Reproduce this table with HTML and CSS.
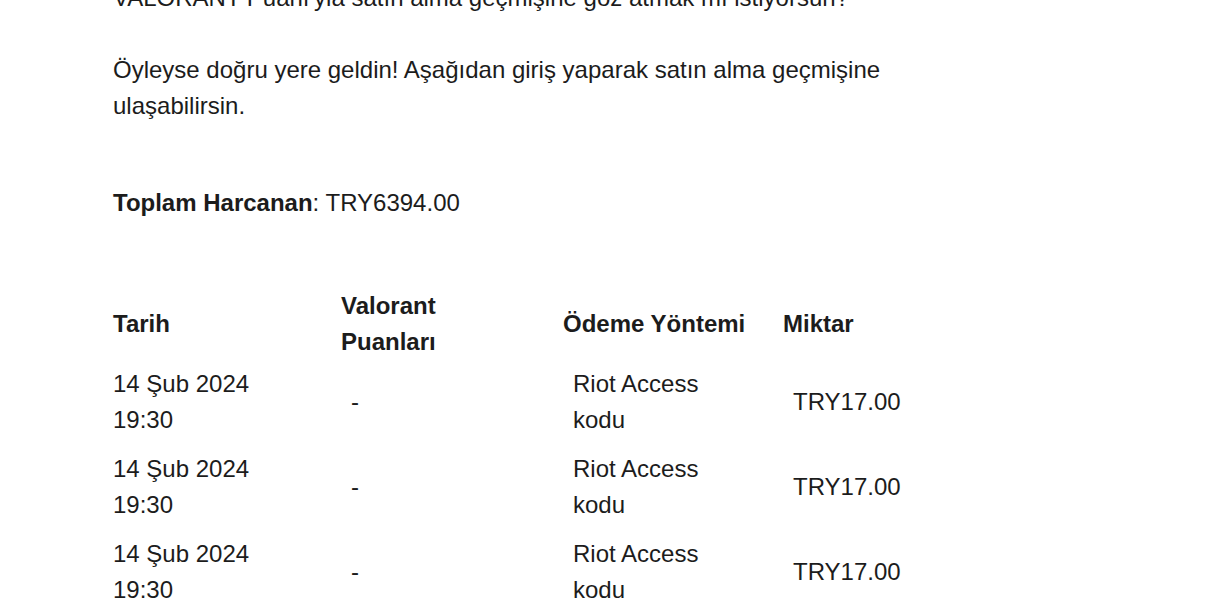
FILE: index.html
```html
<!DOCTYPE html>
<html lang="tr">
<head>
  <meta charset="UTF-8" />
  <meta name="viewport" content="width=device-width, initial-scale=1" />
  <title>VALORANT Satın Alma Geçmişi</title>
  <link rel="stylesheet" href="styles.css">
</head>
<body>
  <div class="container">
    <p class="intro">VALORANT Puanı'yla satın alma geçmişine göz atmak mı istiyorsun?</p>

    <p class="intro">Öyleyse doğru yere geldin! Aşağıdan giriş yaparak satın alma geçmişine ulaşabilirsin.</p>

    <p class="total"><strong>Toplam Harcanan</strong>: TRY6394.00</p>

    <table class="history">
      <colgroup>
        <col class="c-date">
        <col class="c-points">
        <col class="c-method">
        <col class="c-amount">
      </colgroup>
      <thead>
        <tr>
          <th>Tarih</th>
          <th>Valorant Puanları</th>
          <th>Ödeme Yöntemi</th>
          <th>Miktar</th>
        </tr>
      </thead>
      <tbody>
        <tr>
          <td>14 Şub 2024 19:30</td>
          <td>-</td>
          <td>Riot Access kodu</td>
          <td>TRY17.00</td>
        </tr>
        <tr>
          <td>14 Şub 2024 19:30</td>
          <td>-</td>
          <td>Riot Access kodu</td>
          <td>TRY17.00</td>
        </tr>
        <tr>
          <td>14 Şub 2024 19:30</td>
          <td>-</td>
          <td>Riot Access kodu</td>
          <td>TRY17.00</td>
        </tr>
        <tr>
          <td>14 Şub 2024 19:30</td>
          <td>-</td>
          <td>Riot Access kodu</td>
          <td>TRY17.00</td>
        </tr>
      </tbody>
    </table>
  </div>
</body>
</html>
```

FILE: styles.css
```css
body {
  font-family: "Liberation Sans", Arial, sans-serif;
  font-size: 24px;
  line-height: 36px;
  color: #1c1c1c;
  background: #fff;
  margin: 0;
}
.container {
  width: 770px;
  margin: -20px 0 0 113px;
}
p {
  margin: 0;
}
.intro {
  margin-bottom: 36px;
}
.intro + .intro {
  margin-bottom: 61px;
}
.total {
  margin-bottom: 67px;
}
.history {
  border-collapse: collapse;
  table-layout: fixed;
  width: 880px;
}
.c-date { width: 228px; }
.c-points { width: 222px; }
.c-method { width: 220px; }
.c-amount { width: 210px; }
.history th {
  text-align: left;
  font-weight: bold;
  padding: 0 35px 0 0;
  vertical-align: middle;
}
.history td {
  padding: 6px 50px 7px 10px;
  vertical-align: middle;
}
.history td:first-child {
  padding-left: 0;
}
```
